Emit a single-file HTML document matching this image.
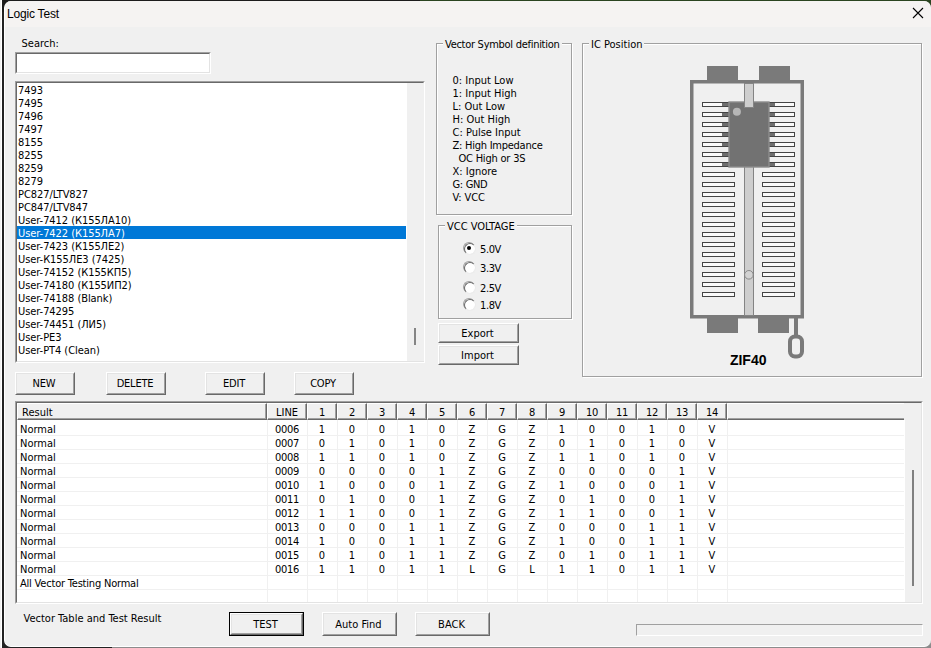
<!DOCTYPE html><html><head><meta charset="utf-8"><title>Logic Test</title><style>
*{box-sizing:border-box}
html,body{margin:0;padding:0}
body{width:931px;height:648px;overflow:hidden;position:relative;background:#f0f0f0;
 font-family:"DejaVu Sans Condensed","DejaVu Sans","Liberation Sans",sans-serif;font-stretch:condensed;font-size:11px;color:#000;line-height:13px}
.abs{position:absolute}
.t{position:absolute;white-space:nowrap;line-height:13px}
#bg{position:absolute;left:0;top:0;width:931px;height:648px;background:linear-gradient(90deg,#222 112px,#8c8c8c 112px)}
#bgt{position:absolute;left:0;top:0;width:931px;height:12px;background:linear-gradient(90deg,#1c1c1c 420px,#2a4420 420px)}
#win{position:absolute;left:4px;top:1px;width:927px;height:646px;border-bottom:1px solid #fff;background:#f0f0f0;border-radius:7px;overflow:hidden;border-left:1px solid #fff}
#lb{position:absolute;left:0;top:0;width:2px;height:648px;background:linear-gradient(90deg,#f0f0f0 1px,#fff 1px)}
#tb{position:absolute;left:0;top:0;width:100%;height:26px;background:#f5f3f2}
#title{position:absolute;left:7px;top:7px;letter-spacing:-0.2px;font-family:"Liberation Sans",sans-serif;font-size:12px;line-height:14px;font-stretch:normal}
.sunk{position:absolute;background:#fff;border-style:solid;border-width:1px;border-color:#a0a0a0 #fff #fff #a0a0a0}
.sunk:before{content:"";position:absolute;left:0;top:0;right:0;bottom:0;border-style:solid;border-width:1px;border-color:#696969 #e3e3e3 #e3e3e3 #696969;pointer-events:none}
.btn{position:absolute;background:#f0f0f0;border-style:solid;border-width:1px;border-color:#fff #696969 #696969 #fff;text-align:center}
.btn:before{content:"";position:absolute;left:0;top:0;right:0;bottom:0;border-style:solid;border-width:1px;border-color:#e3e3e3 #a0a0a0 #a0a0a0 #e3e3e3}
.btn span{position:relative;display:block;line-height:13px}
.grp{position:absolute;border:1px solid #a0a0a0;box-shadow:1px 1px 0 #fff, inset 1px 1px 0 #fff}
.grp b{position:absolute;top:-6px;font-weight:normal;background:#f0f0f0;padding:0 2px;line-height:13px;white-space:nowrap}
.li{position:absolute;left:1px;width:389px;height:13px;line-height:13px;padding:1px 0 0 1px;white-space:nowrap;letter-spacing:-0.06px}
.sel{background:#0078d7;color:#fff}
.rad{position:absolute;width:12px;height:12px;border-radius:50%;background:#fff;border:1px solid;border-color:#a0a0a0 #fff #fff #a0a0a0}
.rad:before{content:"";position:absolute;left:0;top:0;width:10px;height:10px;border-radius:50%;border:1px solid;border-color:#696969 #ececec #ececec #696969}
.rad.on:after{content:"";position:absolute;left:3px;top:3px;width:4px;height:4px;border-radius:50%;background:#000}
.hc{position:absolute;top:1px;height:17px;background:#f0f0f0;border-style:solid;border-width:1px;border-color:#fff #696969 #696969 #fff;text-align:center;line-height:13px;padding-top:2px}
.hc:before{content:"";position:absolute;left:0;top:0;right:0;bottom:0;border-style:solid;border-width:0 1px 1px 0;border-color:#a0a0a0}
.c{position:absolute;line-height:13px;white-space:nowrap}
.cc{position:absolute;width:30px;text-align:center;line-height:13px}
.hl{position:absolute;left:0;width:887px;height:1px;background:#f0f0f0}
.vl{position:absolute;top:18px;width:1px;height:182px;background:#f0f0f0}
</style></head><body>
<div id="bg"></div><div id="bgt"></div><div id="lb"></div><div id="win"><div id="tb"></div></div>
<div id="title">Logic Test</div>
<svg class="abs" style="left:912px;top:7px" width="12" height="12" viewBox="0 0 12 12"><path d="M1 1L11 11M11 1L1 11" stroke="#000" stroke-width="1.1" fill="none"/></svg>
<div class="t" style="left:21.5px;top:37px">Search:</div>
<div class="sunk" style="left:15px;top:52px;width:196px;height:22px"></div>
<div class="sunk" style="left:15px;top:81px;width:410px;height:282px;overflow:hidden">
<div class="li" style="top:1px">7493</div>
<div class="li" style="top:14px">7495</div>
<div class="li" style="top:27px">7496</div>
<div class="li" style="top:40px">7497</div>
<div class="li" style="top:53px">8155</div>
<div class="li" style="top:66px">8255</div>
<div class="li" style="top:79px">8259</div>
<div class="li" style="top:92px">8279</div>
<div class="li" style="top:105px">PC827/LTV827</div>
<div class="li" style="top:118px">PC847/LTV847</div>
<div class="li" style="top:131px">User-7412 (К155ЛА10)</div>
<div class="li sel" style="top:144px">User-7422 (К155ЛА7)</div>
<div class="li" style="top:157px">User-7423 (К155ЛЕ2)</div>
<div class="li" style="top:170px">User-К155ЛЕ3 (7425)</div>
<div class="li" style="top:183px">User-74152 (К155КП5)</div>
<div class="li" style="top:196px">User-74180 (К155ИП2)</div>
<div class="li" style="top:209px">User-74188 (Blank)</div>
<div class="li" style="top:222px">User-74295</div>
<div class="li" style="top:235px">User-74451 (ЛИ5)</div>
<div class="li" style="top:248px">User-PE3</div>
<div class="li" style="top:261px">User-PT4 (Clean)</div>
<div class="abs" style="left:391px;top:1px;width:17px;height:278px;background:#f0f0f0"></div>
<div class="abs" style="left:398px;top:246px;width:2px;height:17px;background:#858585"></div>
</div>
<div class="btn" style="left:15px;top:372px;width:60px;height:23px"><span style="top:4px;left:-1px;letter-spacing:-0.2px">NEW</span></div>
<div class="btn" style="left:106px;top:372px;width:60px;height:23px"><span style="top:4px;left:-1px;letter-spacing:-0.2px">DELETE</span></div>
<div class="btn" style="left:205px;top:372px;width:60px;height:23px"><span style="top:4px;left:-1px;letter-spacing:-0.2px">EDIT</span></div>
<div class="btn" style="left:294px;top:372px;width:60px;height:23px"><span style="top:4px;left:-1px;letter-spacing:-0.2px">COPY</span></div>
<div class="grp" style="left:436px;top:43px;width:136px;height:172px"><b style="left:6px;letter-spacing:-0.28px;padding-right:3px">Vector Symbol definition</b></div>
<div class="t" style="left:452.5px;top:74px">0: Input Low</div>
<div class="t" style="left:452.5px;top:87px">1: Input High</div>
<div class="t" style="left:452.5px;top:100px">L: Out Low</div>
<div class="t" style="left:452.5px;top:113px">H: Out High</div>
<div class="t" style="left:452.5px;top:126px">C: Pulse Input</div>
<div class="t" style="left:452.5px;top:139px;letter-spacing:-0.25px">Z: High Impedance</div>
<div class="t" style="left:452.5px;top:152px;letter-spacing:-0.2px">  OC High or 3S</div>
<div class="t" style="left:452.5px;top:165px">X: Ignore</div>
<div class="t" style="left:452.5px;top:178px;letter-spacing:-0.33px">G: GND</div>
<div class="t" style="left:452.5px;top:191px;letter-spacing:-0.1px">V: VCC</div>
<div class="grp" style="left:438px;top:225px;width:134px;height:94px"><b style="left:6px">VCC VOLTAGE</b></div>
<div class="rad on" style="left:463px;top:242px"></div><div class="t" style="left:480px;top:243px;letter-spacing:-0.4px">5.0V</div>
<div class="rad" style="left:463px;top:261px"></div><div class="t" style="left:480px;top:262px;letter-spacing:-0.4px">3.3V</div>
<div class="rad" style="left:463px;top:281px"></div><div class="t" style="left:480px;top:282px;letter-spacing:-0.4px">2.5V</div>
<div class="rad" style="left:463px;top:298px"></div><div class="t" style="left:480px;top:299px;letter-spacing:-0.4px">1.8V</div>
<div class="btn" style="left:438px;top:323px;width:81px;height:20px"><span style="top:3px;left:-1px">Export</span></div>
<div class="btn" style="left:438px;top:345px;width:81px;height:20px"><span style="top:3px;left:-1px">Import</span></div>
<div class="grp" style="left:582px;top:43px;width:340px;height:334px"><b style="left:6px">IC Position</b></div>
<svg class="abs" style="left:680px;top:60px" width="140" height="310" viewBox="680 60 140 310" shape-rendering="crispEdges"><rect x="707" y="66" width="31" height="15" fill="#7a7a7a"/><rect x="759" y="66" width="31" height="15" fill="#7a7a7a"/><rect x="707" y="318" width="31" height="15" fill="#7a7a7a"/><rect x="758" y="318" width="31" height="15" fill="#7a7a7a"/><rect x="691.75" y="81.75" width="110.5" height="235" fill="#f0f0f0" stroke="#7a7a7a" stroke-width="3.5" shape-rendering="auto"/><rect x="744.5" y="83.5" width="9" height="232" fill="#cecece" stroke="#848484" stroke-width="1"/><rect x="702.5" y="102.5" width="32" height="4" fill="#fafafa" stroke="#444" stroke-width="1"/><rect x="762.5" y="102.5" width="32" height="4" fill="#fafafa" stroke="#444" stroke-width="1"/><rect x="702.5" y="112.5" width="32" height="4" fill="#fafafa" stroke="#444" stroke-width="1"/><rect x="762.5" y="112.5" width="32" height="4" fill="#fafafa" stroke="#444" stroke-width="1"/><rect x="702.5" y="122.5" width="32" height="4" fill="#fafafa" stroke="#444" stroke-width="1"/><rect x="762.5" y="122.5" width="32" height="4" fill="#fafafa" stroke="#444" stroke-width="1"/><rect x="702.5" y="132.5" width="32" height="4" fill="#fafafa" stroke="#444" stroke-width="1"/><rect x="762.5" y="132.5" width="32" height="4" fill="#fafafa" stroke="#444" stroke-width="1"/><rect x="702.5" y="142.5" width="32" height="4" fill="#fafafa" stroke="#444" stroke-width="1"/><rect x="762.5" y="142.5" width="32" height="4" fill="#fafafa" stroke="#444" stroke-width="1"/><rect x="702.5" y="152.5" width="32" height="4" fill="#fafafa" stroke="#444" stroke-width="1"/><rect x="762.5" y="152.5" width="32" height="4" fill="#fafafa" stroke="#444" stroke-width="1"/><rect x="702.5" y="162.5" width="32" height="4" fill="#fafafa" stroke="#444" stroke-width="1"/><rect x="762.5" y="162.5" width="32" height="4" fill="#fafafa" stroke="#444" stroke-width="1"/><rect x="702.5" y="172.5" width="32" height="4" fill="#fafafa" stroke="#444" stroke-width="1"/><rect x="762.5" y="172.5" width="32" height="4" fill="#fafafa" stroke="#444" stroke-width="1"/><rect x="702.5" y="182.5" width="32" height="4" fill="#fafafa" stroke="#444" stroke-width="1"/><rect x="762.5" y="182.5" width="32" height="4" fill="#fafafa" stroke="#444" stroke-width="1"/><rect x="702.5" y="192.5" width="32" height="4" fill="#fafafa" stroke="#444" stroke-width="1"/><rect x="762.5" y="192.5" width="32" height="4" fill="#fafafa" stroke="#444" stroke-width="1"/><rect x="702.5" y="202.5" width="32" height="4" fill="#fafafa" stroke="#444" stroke-width="1"/><rect x="762.5" y="202.5" width="32" height="4" fill="#fafafa" stroke="#444" stroke-width="1"/><rect x="702.5" y="212.5" width="32" height="4" fill="#fafafa" stroke="#444" stroke-width="1"/><rect x="762.5" y="212.5" width="32" height="4" fill="#fafafa" stroke="#444" stroke-width="1"/><rect x="702.5" y="222.5" width="32" height="4" fill="#fafafa" stroke="#444" stroke-width="1"/><rect x="762.5" y="222.5" width="32" height="4" fill="#fafafa" stroke="#444" stroke-width="1"/><rect x="702.5" y="232.5" width="32" height="4" fill="#fafafa" stroke="#444" stroke-width="1"/><rect x="762.5" y="232.5" width="32" height="4" fill="#fafafa" stroke="#444" stroke-width="1"/><rect x="702.5" y="242.5" width="32" height="4" fill="#fafafa" stroke="#444" stroke-width="1"/><rect x="762.5" y="242.5" width="32" height="4" fill="#fafafa" stroke="#444" stroke-width="1"/><rect x="702.5" y="252.5" width="32" height="4" fill="#fafafa" stroke="#444" stroke-width="1"/><rect x="762.5" y="252.5" width="32" height="4" fill="#fafafa" stroke="#444" stroke-width="1"/><rect x="702.5" y="262.5" width="32" height="4" fill="#fafafa" stroke="#444" stroke-width="1"/><rect x="762.5" y="262.5" width="32" height="4" fill="#fafafa" stroke="#444" stroke-width="1"/><rect x="702.5" y="272.5" width="32" height="4" fill="#fafafa" stroke="#444" stroke-width="1"/><rect x="762.5" y="272.5" width="32" height="4" fill="#fafafa" stroke="#444" stroke-width="1"/><rect x="702.5" y="282.5" width="32" height="4" fill="#fafafa" stroke="#444" stroke-width="1"/><rect x="762.5" y="282.5" width="32" height="4" fill="#fafafa" stroke="#444" stroke-width="1"/><rect x="702.5" y="292.5" width="32" height="4" fill="#fafafa" stroke="#444" stroke-width="1"/><rect x="762.5" y="292.5" width="32" height="4" fill="#fafafa" stroke="#444" stroke-width="1"/><rect x="722" y="103" width="8" height="3" fill="#6e6e6e"/><rect x="768" y="103" width="7" height="3" fill="#6e6e6e"/><rect x="722" y="113" width="8" height="3" fill="#6e6e6e"/><rect x="768" y="113" width="7" height="3" fill="#6e6e6e"/><rect x="722" y="123" width="8" height="3" fill="#6e6e6e"/><rect x="768" y="123" width="7" height="3" fill="#6e6e6e"/><rect x="722" y="133" width="8" height="3" fill="#6e6e6e"/><rect x="768" y="133" width="7" height="3" fill="#6e6e6e"/><rect x="722" y="143" width="8" height="3" fill="#6e6e6e"/><rect x="768" y="143" width="7" height="3" fill="#6e6e6e"/><rect x="722" y="153" width="8" height="3" fill="#6e6e6e"/><rect x="768" y="153" width="7" height="3" fill="#6e6e6e"/><rect x="722" y="163" width="8" height="3" fill="#6e6e6e"/><rect x="768" y="163" width="7" height="3" fill="#6e6e6e"/><rect x="729" y="102" width="40" height="65" fill="#727272" stroke="#8c8c8c" stroke-width="1.4" shape-rendering="auto"/><rect x="744.5" y="83.5" width="9" height="24" fill="#cecece" stroke="#848484" stroke-width="1"/><circle cx="736.9" cy="111.8" r="4" fill="#b6b6b6" shape-rendering="auto"/><circle cx="748.9" cy="274.8" r="4.3" fill="#d2d2d2" stroke="#808080" stroke-width="0.9" shape-rendering="auto"/><rect x="794" y="318" width="4" height="18" fill="#7a7a7a"/><rect x="790" y="336.5" width="12" height="20" rx="5" ry="5" fill="none" stroke="#7a7a7a" stroke-width="4" shape-rendering="auto"/><text x="748.2" y="364.7" text-anchor="middle" font-family="Liberation Sans, sans-serif" font-weight="bold" font-size="14" fill="#000" shape-rendering="auto">ZIF40</text></svg>
<div class="sunk" style="left:15px;top:401px;width:908px;height:203px;overflow:hidden">
<div class="abs" style="left:1px;top:1px;width:904px;height:199px;background:#f0f0f0"></div>
<div class="abs" style="left:1px;top:18px;width:888px;height:182px;background:#fff"></div>
<div class="hc" style="left:1px;width:250px;text-align:left;padding-left:4px;">Result</div>
<div class="hc" style="left:251px;width:40px;">LINE</div>
<div class="hc" style="left:291px;width:30px;letter-spacing:-0.3px;">1</div>
<div class="hc" style="left:321px;width:30px;letter-spacing:-0.3px;">2</div>
<div class="hc" style="left:351px;width:30px;letter-spacing:-0.3px;">3</div>
<div class="hc" style="left:381px;width:30px;letter-spacing:-0.3px;">4</div>
<div class="hc" style="left:411px;width:30px;letter-spacing:-0.3px;">5</div>
<div class="hc" style="left:441px;width:30px;letter-spacing:-0.3px;">6</div>
<div class="hc" style="left:471px;width:30px;letter-spacing:-0.3px;">7</div>
<div class="hc" style="left:501px;width:30px;letter-spacing:-0.3px;">8</div>
<div class="hc" style="left:531px;width:30px;letter-spacing:-0.3px;">9</div>
<div class="hc" style="left:561px;width:30px;letter-spacing:-0.3px;">10</div>
<div class="hc" style="left:591px;width:30px;letter-spacing:-0.3px;">11</div>
<div class="hc" style="left:621px;width:30px;letter-spacing:-0.3px;">12</div>
<div class="hc" style="left:651px;width:30px;letter-spacing:-0.3px;">13</div>
<div class="hc" style="left:681px;width:30px;letter-spacing:-0.3px;">14</div>
<div class="abs" style="left:711px;top:1px;width:177px;height:17px;background:#f0f0f0;border-style:solid;border-color:#fff #f0f0f0 #696969 #fff;border-width:1px 0 1px 1px"><div class="abs" style="left:0;bottom:0;width:100%;height:1px;background:#a0a0a0"></div></div>
<div class="hl" style="left:1px;top:33px"></div>
<div class="hl" style="left:1px;top:47px"></div>
<div class="hl" style="left:1px;top:61px"></div>
<div class="hl" style="left:1px;top:75px"></div>
<div class="hl" style="left:1px;top:89px"></div>
<div class="hl" style="left:1px;top:103px"></div>
<div class="hl" style="left:1px;top:117px"></div>
<div class="hl" style="left:1px;top:131px"></div>
<div class="hl" style="left:1px;top:145px"></div>
<div class="hl" style="left:1px;top:159px"></div>
<div class="hl" style="left:1px;top:173px"></div>
<div class="hl" style="left:1px;top:187px"></div>
<div class="vl" style="left:251px"></div>
<div class="vl" style="left:291px"></div>
<div class="vl" style="left:321px"></div>
<div class="vl" style="left:351px"></div>
<div class="vl" style="left:381px"></div>
<div class="vl" style="left:411px"></div>
<div class="vl" style="left:441px"></div>
<div class="vl" style="left:471px"></div>
<div class="vl" style="left:501px"></div>
<div class="vl" style="left:531px"></div>
<div class="vl" style="left:561px"></div>
<div class="vl" style="left:591px"></div>
<div class="vl" style="left:621px"></div>
<div class="vl" style="left:651px"></div>
<div class="vl" style="left:681px"></div>
<div class="vl" style="left:711px"></div>
<div class="c" style="left:4px;top:21px">Normal</div><div class="cc" style="left:251px;width:40px;top:21px;letter-spacing:-0.3px">0006</div>
<div class="cc" style="left:291px;top:21px">1</div>
<div class="cc" style="left:321px;top:21px">0</div>
<div class="cc" style="left:351px;top:21px">0</div>
<div class="cc" style="left:381px;top:21px">1</div>
<div class="cc" style="left:411px;top:21px">0</div>
<div class="cc" style="left:441px;top:21px">Z</div>
<div class="cc" style="left:471px;top:21px">G</div>
<div class="cc" style="left:501px;top:21px">Z</div>
<div class="cc" style="left:531px;top:21px">1</div>
<div class="cc" style="left:561px;top:21px">0</div>
<div class="cc" style="left:591px;top:21px">0</div>
<div class="cc" style="left:621px;top:21px">1</div>
<div class="cc" style="left:651px;top:21px">0</div>
<div class="cc" style="left:681px;top:21px">V</div>
<div class="c" style="left:4px;top:35px">Normal</div><div class="cc" style="left:251px;width:40px;top:35px;letter-spacing:-0.3px">0007</div>
<div class="cc" style="left:291px;top:35px">0</div>
<div class="cc" style="left:321px;top:35px">1</div>
<div class="cc" style="left:351px;top:35px">0</div>
<div class="cc" style="left:381px;top:35px">1</div>
<div class="cc" style="left:411px;top:35px">0</div>
<div class="cc" style="left:441px;top:35px">Z</div>
<div class="cc" style="left:471px;top:35px">G</div>
<div class="cc" style="left:501px;top:35px">Z</div>
<div class="cc" style="left:531px;top:35px">0</div>
<div class="cc" style="left:561px;top:35px">1</div>
<div class="cc" style="left:591px;top:35px">0</div>
<div class="cc" style="left:621px;top:35px">1</div>
<div class="cc" style="left:651px;top:35px">0</div>
<div class="cc" style="left:681px;top:35px">V</div>
<div class="c" style="left:4px;top:49px">Normal</div><div class="cc" style="left:251px;width:40px;top:49px;letter-spacing:-0.3px">0008</div>
<div class="cc" style="left:291px;top:49px">1</div>
<div class="cc" style="left:321px;top:49px">1</div>
<div class="cc" style="left:351px;top:49px">0</div>
<div class="cc" style="left:381px;top:49px">1</div>
<div class="cc" style="left:411px;top:49px">0</div>
<div class="cc" style="left:441px;top:49px">Z</div>
<div class="cc" style="left:471px;top:49px">G</div>
<div class="cc" style="left:501px;top:49px">Z</div>
<div class="cc" style="left:531px;top:49px">1</div>
<div class="cc" style="left:561px;top:49px">1</div>
<div class="cc" style="left:591px;top:49px">0</div>
<div class="cc" style="left:621px;top:49px">1</div>
<div class="cc" style="left:651px;top:49px">0</div>
<div class="cc" style="left:681px;top:49px">V</div>
<div class="c" style="left:4px;top:63px">Normal</div><div class="cc" style="left:251px;width:40px;top:63px;letter-spacing:-0.3px">0009</div>
<div class="cc" style="left:291px;top:63px">0</div>
<div class="cc" style="left:321px;top:63px">0</div>
<div class="cc" style="left:351px;top:63px">0</div>
<div class="cc" style="left:381px;top:63px">0</div>
<div class="cc" style="left:411px;top:63px">1</div>
<div class="cc" style="left:441px;top:63px">Z</div>
<div class="cc" style="left:471px;top:63px">G</div>
<div class="cc" style="left:501px;top:63px">Z</div>
<div class="cc" style="left:531px;top:63px">0</div>
<div class="cc" style="left:561px;top:63px">0</div>
<div class="cc" style="left:591px;top:63px">0</div>
<div class="cc" style="left:621px;top:63px">0</div>
<div class="cc" style="left:651px;top:63px">1</div>
<div class="cc" style="left:681px;top:63px">V</div>
<div class="c" style="left:4px;top:77px">Normal</div><div class="cc" style="left:251px;width:40px;top:77px;letter-spacing:-0.3px">0010</div>
<div class="cc" style="left:291px;top:77px">1</div>
<div class="cc" style="left:321px;top:77px">0</div>
<div class="cc" style="left:351px;top:77px">0</div>
<div class="cc" style="left:381px;top:77px">0</div>
<div class="cc" style="left:411px;top:77px">1</div>
<div class="cc" style="left:441px;top:77px">Z</div>
<div class="cc" style="left:471px;top:77px">G</div>
<div class="cc" style="left:501px;top:77px">Z</div>
<div class="cc" style="left:531px;top:77px">1</div>
<div class="cc" style="left:561px;top:77px">0</div>
<div class="cc" style="left:591px;top:77px">0</div>
<div class="cc" style="left:621px;top:77px">0</div>
<div class="cc" style="left:651px;top:77px">1</div>
<div class="cc" style="left:681px;top:77px">V</div>
<div class="c" style="left:4px;top:91px">Normal</div><div class="cc" style="left:251px;width:40px;top:91px;letter-spacing:-0.3px">0011</div>
<div class="cc" style="left:291px;top:91px">0</div>
<div class="cc" style="left:321px;top:91px">1</div>
<div class="cc" style="left:351px;top:91px">0</div>
<div class="cc" style="left:381px;top:91px">0</div>
<div class="cc" style="left:411px;top:91px">1</div>
<div class="cc" style="left:441px;top:91px">Z</div>
<div class="cc" style="left:471px;top:91px">G</div>
<div class="cc" style="left:501px;top:91px">Z</div>
<div class="cc" style="left:531px;top:91px">0</div>
<div class="cc" style="left:561px;top:91px">1</div>
<div class="cc" style="left:591px;top:91px">0</div>
<div class="cc" style="left:621px;top:91px">0</div>
<div class="cc" style="left:651px;top:91px">1</div>
<div class="cc" style="left:681px;top:91px">V</div>
<div class="c" style="left:4px;top:105px">Normal</div><div class="cc" style="left:251px;width:40px;top:105px;letter-spacing:-0.3px">0012</div>
<div class="cc" style="left:291px;top:105px">1</div>
<div class="cc" style="left:321px;top:105px">1</div>
<div class="cc" style="left:351px;top:105px">0</div>
<div class="cc" style="left:381px;top:105px">0</div>
<div class="cc" style="left:411px;top:105px">1</div>
<div class="cc" style="left:441px;top:105px">Z</div>
<div class="cc" style="left:471px;top:105px">G</div>
<div class="cc" style="left:501px;top:105px">Z</div>
<div class="cc" style="left:531px;top:105px">1</div>
<div class="cc" style="left:561px;top:105px">1</div>
<div class="cc" style="left:591px;top:105px">0</div>
<div class="cc" style="left:621px;top:105px">0</div>
<div class="cc" style="left:651px;top:105px">1</div>
<div class="cc" style="left:681px;top:105px">V</div>
<div class="c" style="left:4px;top:119px">Normal</div><div class="cc" style="left:251px;width:40px;top:119px;letter-spacing:-0.3px">0013</div>
<div class="cc" style="left:291px;top:119px">0</div>
<div class="cc" style="left:321px;top:119px">0</div>
<div class="cc" style="left:351px;top:119px">0</div>
<div class="cc" style="left:381px;top:119px">1</div>
<div class="cc" style="left:411px;top:119px">1</div>
<div class="cc" style="left:441px;top:119px">Z</div>
<div class="cc" style="left:471px;top:119px">G</div>
<div class="cc" style="left:501px;top:119px">Z</div>
<div class="cc" style="left:531px;top:119px">0</div>
<div class="cc" style="left:561px;top:119px">0</div>
<div class="cc" style="left:591px;top:119px">0</div>
<div class="cc" style="left:621px;top:119px">1</div>
<div class="cc" style="left:651px;top:119px">1</div>
<div class="cc" style="left:681px;top:119px">V</div>
<div class="c" style="left:4px;top:133px">Normal</div><div class="cc" style="left:251px;width:40px;top:133px;letter-spacing:-0.3px">0014</div>
<div class="cc" style="left:291px;top:133px">1</div>
<div class="cc" style="left:321px;top:133px">0</div>
<div class="cc" style="left:351px;top:133px">0</div>
<div class="cc" style="left:381px;top:133px">1</div>
<div class="cc" style="left:411px;top:133px">1</div>
<div class="cc" style="left:441px;top:133px">Z</div>
<div class="cc" style="left:471px;top:133px">G</div>
<div class="cc" style="left:501px;top:133px">Z</div>
<div class="cc" style="left:531px;top:133px">1</div>
<div class="cc" style="left:561px;top:133px">0</div>
<div class="cc" style="left:591px;top:133px">0</div>
<div class="cc" style="left:621px;top:133px">1</div>
<div class="cc" style="left:651px;top:133px">1</div>
<div class="cc" style="left:681px;top:133px">V</div>
<div class="c" style="left:4px;top:147px">Normal</div><div class="cc" style="left:251px;width:40px;top:147px;letter-spacing:-0.3px">0015</div>
<div class="cc" style="left:291px;top:147px">0</div>
<div class="cc" style="left:321px;top:147px">1</div>
<div class="cc" style="left:351px;top:147px">0</div>
<div class="cc" style="left:381px;top:147px">1</div>
<div class="cc" style="left:411px;top:147px">1</div>
<div class="cc" style="left:441px;top:147px">Z</div>
<div class="cc" style="left:471px;top:147px">G</div>
<div class="cc" style="left:501px;top:147px">Z</div>
<div class="cc" style="left:531px;top:147px">0</div>
<div class="cc" style="left:561px;top:147px">1</div>
<div class="cc" style="left:591px;top:147px">0</div>
<div class="cc" style="left:621px;top:147px">1</div>
<div class="cc" style="left:651px;top:147px">1</div>
<div class="cc" style="left:681px;top:147px">V</div>
<div class="c" style="left:4px;top:161px">Normal</div><div class="cc" style="left:251px;width:40px;top:161px;letter-spacing:-0.3px">0016</div>
<div class="cc" style="left:291px;top:161px">1</div>
<div class="cc" style="left:321px;top:161px">1</div>
<div class="cc" style="left:351px;top:161px">0</div>
<div class="cc" style="left:381px;top:161px">1</div>
<div class="cc" style="left:411px;top:161px">1</div>
<div class="cc" style="left:441px;top:161px">L</div>
<div class="cc" style="left:471px;top:161px">G</div>
<div class="cc" style="left:501px;top:161px">L</div>
<div class="cc" style="left:531px;top:161px">1</div>
<div class="cc" style="left:561px;top:161px">1</div>
<div class="cc" style="left:591px;top:161px">0</div>
<div class="cc" style="left:621px;top:161px">1</div>
<div class="cc" style="left:651px;top:161px">1</div>
<div class="cc" style="left:681px;top:161px">V</div>
<div class="c" style="left:4px;top:175px;letter-spacing:-0.2px">All Vector Testing Normal</div>
<div class="abs" style="left:896px;top:68px;width:2px;height:116px;background:#808080"></div>
</div>
<div class="t" style="left:23.5px;top:612px">Vector Table and Test Result</div>
<div class="btn" style="left:229px;top:612px;width:75px;height:24px;border-color:#000;padding:0"><div class="btn" style="left:0;top:0;width:73px;height:22px"><span style="top:4px;left:-1px">TEST</span></div></div>
<div class="btn" style="left:322px;top:612px;width:75px;height:24px"><span style="top:5px;left:-1px">Auto Find</span></div>
<div class="btn" style="left:415px;top:612px;width:75px;height:24px"><span style="top:5px;left:-1px">BACK</span></div>
<div class="abs" style="left:636px;top:624px;width:287px;height:12px;border:1px solid;border-color:#a0a0a0 #fff #fff #a0a0a0"></div>
</body></html>
